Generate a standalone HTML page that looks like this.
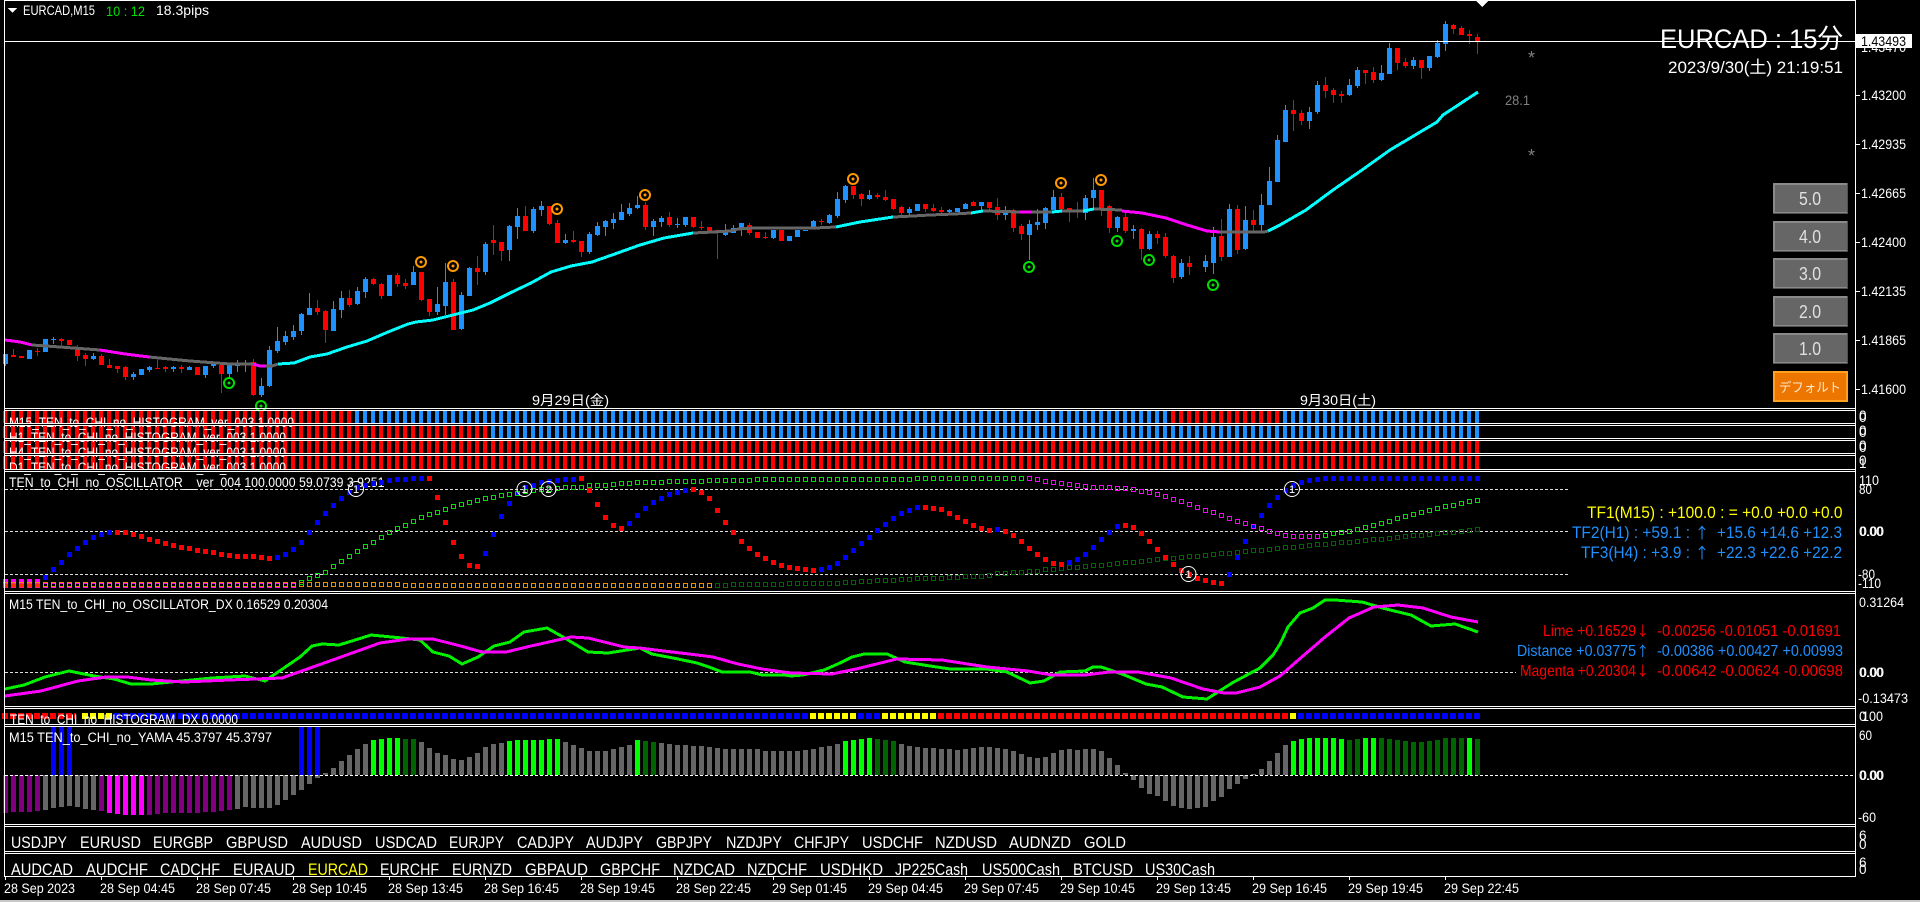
<!DOCTYPE html>
<html lang="ja"><head><meta charset="utf-8"><title>EURCAD,M15</title>
<style>
html,body{margin:0;padding:0;background:#000;width:1920px;height:902px;overflow:hidden}
svg{display:block;font-family:"Liberation Sans","Noto Sans CJK JP",sans-serif;font-size:13.5px}
text{fill:#fff}
.n{fill:none;stroke:none}
path,rect,polyline,circle{shape-rendering:crispEdges}
circle.r{shape-rendering:auto}
.w{fill:none;stroke-width:1}
.b{fill:none;stroke-width:5}
.a{font-family:"Noto Sans CJK JP",sans-serif}
.mB{marker:url(#mB)}.mR{marker:url(#mR)}.mG{marker:url(#mG)}.mM{marker:url(#mM)}.mD{marker:url(#mD)}
</style></head><body>
<svg width="1920" height="902" viewBox="0 0 1920 902" xmlns="http://www.w3.org/2000/svg">
<defs>
<marker id="mB" markerUnits="userSpaceOnUse" markerWidth="5" markerHeight="5" refX="2" refY="2" overflow="visible"><rect width="5" height="5" fill="#0000ff"/></marker>
<marker id="mR" markerUnits="userSpaceOnUse" markerWidth="5" markerHeight="5" refX="2" refY="2" overflow="visible"><rect width="5" height="5" fill="#ff0000"/></marker>
<marker id="mG" markerUnits="userSpaceOnUse" markerWidth="6" markerHeight="6" refX="2" refY="2" overflow="visible"><rect x=".5" y=".5" width="4" height="4" fill="none" stroke="#00e000"/></marker>
<marker id="mM" markerUnits="userSpaceOnUse" markerWidth="6" markerHeight="6" refX="2" refY="2" overflow="visible"><rect x=".5" y=".5" width="4" height="4" fill="none" stroke="#ff00ff"/></marker>
<marker id="mD" markerUnits="userSpaceOnUse" markerWidth="6" markerHeight="6" refX="2" refY="2" overflow="visible"><rect x=".5" y=".5" width="4" height="4" fill="none" stroke="#006400"/></marker>
<pattern id="po1" patternUnits="userSpaceOnUse" x="3" y="582" width="8" height="5"><rect x=".5" y=".5" width="4" height="4" fill="none" stroke="#f08c00"/></pattern>
<pattern id="po2" patternUnits="userSpaceOnUse" x="3" y="583" width="8" height="5"><rect x=".5" y=".5" width="4" height="4" fill="none" stroke="#f08c00"/></pattern>
<pattern id="pm" patternUnits="userSpaceOnUse" x="3" y="583" width="8" height="5"><rect x=".5" y=".5" width="4" height="4" fill="none" stroke="#ff00ff"/></pattern>
</defs>
<rect width="1920" height="902" fill="#000"/>

<!-- candles -->
<path class="w" stroke="#1e90ff" d="M5.5 354V366M45.5 339V352M53.5 337V344M93.5 353V360M133.5 372V380M149.5 366V372M173.5 366V372M189.5 366V370M205.5 366V378M213.5 363V368M229.5 364V378M237.5 360V372M245.5 360V372M261.5 378V397M269.5 346V387M277.5 327V353M285.5 331V345M293.5 325V340M301.5 313V335M309.5 293V315M333.5 301V331M341.5 291V318M357.5 287V305M365.5 277V298M413.5 266V285M437.5 287V315M445.5 263V315M461.5 292V330M469.5 267V296M485.5 242V275M509.5 225V261M517.5 208V239M533.5 207V233M541.5 201V216M565.5 234V244M589.5 232V254M597.5 222V236M605.5 220V236M613.5 213V229M621.5 204V220M629.5 203V216M637.5 196V209M653.5 219V236M661.5 216V227M677.5 218V228M685.5 217V227M725.5 224V236M733.5 225V233M741.5 223V236M773.5 230V239M813.5 220V228M829.5 214V224M837.5 192V218M845.5 185V203M869.5 190V200M909.5 207V216M949.5 209V213M965.5 203V209M981.5 202V212M1005.5 206V220M1029.5 220V260M1037.5 209V230M1045.5 207V229M1053.5 190V210M1085.5 195V220M1093.5 178V209M1117.5 216V232M1133.5 225V239M1149.5 231V250M1181.5 259V279M1205.5 255V272M1213.5 227V274M1229.5 204V257M1245.5 206V250M1261.5 194V232M1269.5 167V205M1277.5 135V182M1285.5 105V142M1309.5 107V129M1317.5 81V114M1349.5 79V96M1357.5 67V88M1381.5 65V81M1389.5 43V74M1413.5 57V69M1429.5 56V71M1437.5 40V58M1445.5 21V51"/>
<path class="w" stroke="#f00" d="M13.5 349V357M37.5 348V356M61.5 338V345M77.5 345V361M85.5 353V366M101.5 354V365M109.5 359V368M117.5 366V373M125.5 366V380M157.5 360V369M165.5 366V372M181.5 365V373M221.5 363V393M253.5 359V396M317.5 300V315M325.5 310V343M349.5 290V307M373.5 278V285M381.5 283V299M397.5 273V287M405.5 279V289M421.5 272V301M429.5 299V316M453.5 279V330M477.5 256V285M493.5 225V255M501.5 242V261M525.5 206V231M549.5 206V225M557.5 220V243M573.5 231V243M581.5 241V257M645.5 202V230M669.5 212V227M693.5 217V228M701.5 221V230M717.5 230V259M749.5 223V235M765.5 232V239M821.5 219V225M853.5 186V199M861.5 193V206M877.5 193V199M885.5 190V201M893.5 199V210M901.5 206V215M925.5 204V212M933.5 204V212M941.5 207V213M973.5 201V206M989.5 202V210M997.5 198V220M1013.5 209V232M1021.5 224V240M1061.5 193V213M1069.5 208V222M1077.5 202V218M1101.5 190V216M1109.5 205V233M1125.5 210V233M1141.5 228V260M1157.5 231V244M1165.5 233V258M1173.5 255V283M1189.5 256V275M1221.5 219V261M1237.5 205V254M1253.5 210V232M1293.5 100V131M1301.5 110V125M1325.5 77V98M1333.5 88V103M1341.5 91V103M1365.5 70V84M1373.5 67V83M1397.5 48V70M1405.5 58V68M1421.5 60V79M1453.5 24V34M1461.5 26V35M1469.5 30V44M1477.5 34V54"/>
<path class="b" stroke="#1e90ff" d="M5.5 354V364M29.5 350V359M45.5 339V352M53.5 339V340M93.5 356V359M133.5 374V377M141.5 369V375M149.5 367V370M173.5 367V369M189.5 367V370M205.5 366V375M213.5 364V366M229.5 364V374M237.5 363V366M245.5 363V364M261.5 386V395M269.5 350V386M277.5 341V351M285.5 336V342M293.5 331V337M301.5 314V331M309.5 308V315M333.5 309V331M341.5 298V310M357.5 291V304M365.5 279V292M389.5 275V296M413.5 272V285M437.5 304V312M445.5 282V306M461.5 295V329M469.5 268V296M485.5 244V272M509.5 226V250M517.5 216V227M533.5 209V231M541.5 206V210M565.5 240V243M589.5 234V252M597.5 226V235M605.5 221V227M613.5 219V223M621.5 212V220M629.5 208V214M637.5 205V208M653.5 221V227M661.5 218V222M677.5 224V225M685.5 217V225M725.5 232V235M733.5 228V233M741.5 223V230M773.5 230V238M789.5 236V241M797.5 230V237M805.5 230V231M813.5 221V228M829.5 215V223M837.5 199V216M845.5 186V200M869.5 195V199M909.5 209V213M917.5 204V211M949.5 210V212M957.5 208V212M965.5 204V209M981.5 202V206M1005.5 210V215M1029.5 224V235M1037.5 222V225M1045.5 208V223M1053.5 197V210M1085.5 198V213M1093.5 190V198M1117.5 217V228M1133.5 229V231M1149.5 234V249M1181.5 263V277M1205.5 261V267M1213.5 237V263M1229.5 209V257M1245.5 220V249M1261.5 205V225M1269.5 181V205M1277.5 140V182M1285.5 110V142M1309.5 112V121M1317.5 85V112M1349.5 85V95M1357.5 70V86M1381.5 73V80M1389.5 48V74M1413.5 60V66M1429.5 56V68M1437.5 43V57M1445.5 24V44"/>
<path class="b" stroke="#f00" d="M13.5 355V357M21.5 356V358M37.5 351V352M61.5 339V341M69.5 340V345M77.5 348V356M85.5 355V359M101.5 356V365M109.5 365V368M117.5 366V369M125.5 367V377M157.5 368V369M165.5 367V369M181.5 367V369M197.5 367V375M221.5 365V374M253.5 362V395M317.5 308V312M325.5 311V330M349.5 298V305M373.5 279V284M381.5 284V296M397.5 275V284M405.5 283V286M421.5 272V300M429.5 299V312M453.5 282V330M477.5 268V272M493.5 240V243M501.5 242V251M525.5 216V231M549.5 206V224M557.5 223V243M573.5 240V242M581.5 241V252M645.5 205V227M669.5 217V225M693.5 217V227M701.5 227V228M709.5 227V231M717.5 230V233M749.5 225V233M757.5 232V238M765.5 237V238M781.5 230V241M821.5 221V222M853.5 186V195M861.5 194V199M877.5 195V197M885.5 197V200M893.5 199V209M901.5 207V213M925.5 204V209M933.5 208V211M941.5 210V212M973.5 202V206M989.5 202V208M997.5 207V215M1013.5 210V228M1021.5 226V234M1061.5 197V209M1069.5 208V212M1077.5 210V211M1101.5 190V208M1109.5 206V228M1125.5 217V231M1141.5 229V249M1157.5 234V238M1165.5 237V256M1173.5 256V278M1189.5 263V267M1221.5 236V257M1237.5 209V250M1253.5 220V225M1293.5 110V114M1301.5 113V121M1325.5 85V91M1333.5 90V95M1341.5 94V96M1365.5 70V73M1373.5 72V80M1397.5 48V63M1405.5 62V66M1421.5 60V68M1453.5 25V29M1461.5 28V35M1469.5 34V36M1477.5 37V41"/>

<!-- moving average -->
<g fill="none" stroke-width="3" stroke-linejoin="round">
<polyline stroke="#ff00ff" points="5,340 20,342 32,345"/>
<polyline stroke="#666" points="32,345 60,347 100,350"/>
<polyline stroke="#ff00ff" points="100,350 125,354 149,357"/>
<polyline stroke="#666" points="149,357 190,361 230,364 253,364"/>
<polyline stroke="#ff00ff" points="253,364 260,366 265,366"/>
<polyline stroke="#666" points="265,366 272,366 278,364"/>
<polyline stroke="#00ffff" points="278,364 294,363 310,357 327,354 347,347 367,341 388,332 408,324 416,322 433,320 449,316 473,310 490,303 510,293 531,283 551,272 571,266 592,262 612,255 640,245 664,238 693,233"/>
<polyline stroke="#666" points="693,233 713,232 730,231 738,229 754,228 815,228 836,227"/>
<polyline stroke="#00ffff" points="836,227 860,222 893,217"/>
<polyline stroke="#666" points="893,217 913,216 930,215 954,214 971,213"/>
<polyline stroke="#00ffff" points="971,213 983,211"/>
<polyline stroke="#666" points="983,211 1020,212"/>
<polyline stroke="#ff00ff" points="1020,212 1032,212"/>
<polyline stroke="#666" points="1032,212 1052,212"/>
<polyline stroke="#00ffff" points="1052,212 1062,211"/>
<polyline stroke="#666" points="1062,211 1083,211"/>
<polyline stroke="#00ffff" points="1083,211 1094,209"/>
<polyline stroke="#666" points="1094,209 1122,210"/>
<polyline stroke="#ff00ff" points="1122,211 1142,213 1166,218 1187,225 1207,231 1220,232"/>
<polyline stroke="#666" points="1220,232 1264,232 1268,231"/>
<polyline stroke="#00ffff" points="1268,231 1280,225 1306,210 1333,190 1362,170 1390,150 1437,122 1443,115 1478,92"/>
</g>

<!-- arrow markers -->
<g fill="none" stroke-width="2" stroke="#ff9a00">
<circle class="r" cx="421" cy="262" r="5"/><circle class="r" cx="453" cy="266" r="5"/><circle class="r" cx="557" cy="209" r="5"/><circle class="r" cx="645" cy="195" r="5"/><circle class="r" cx="853" cy="179" r="5"/><circle class="r" cx="1061" cy="183" r="5"/><circle class="r" cx="1101" cy="180" r="5"/>
</g>
<g fill="#ff9a00">
<circle class="r" cx="421" cy="262" r="1.5"/><circle class="r" cx="453" cy="266" r="1.5"/><circle class="r" cx="557" cy="209" r="1.5"/><circle class="r" cx="645" cy="195" r="1.5"/><circle class="r" cx="853" cy="179" r="1.5"/><circle class="r" cx="1061" cy="183" r="1.5"/><circle class="r" cx="1101" cy="180" r="1.5"/>
</g>
<g fill="none" stroke-width="2" stroke="#00e000">
<circle class="r" cx="229" cy="383" r="5"/><circle class="r" cx="261" cy="406" r="5"/><circle class="r" cx="1029" cy="267" r="5"/><circle class="r" cx="1117" cy="241" r="5"/><circle class="r" cx="1149" cy="260" r="5"/><circle class="r" cx="1213" cy="285" r="5"/>
</g>
<g fill="#00e000">
<circle class="r" cx="229" cy="383" r="1.5"/><circle class="r" cx="261" cy="406" r="1.5"/><circle class="r" cx="1029" cy="267" r="1.5"/><circle class="r" cx="1117" cy="241" r="1.5"/><circle class="r" cx="1149" cy="260" r="1.5"/><circle class="r" cx="1213" cy="285" r="1.5"/>
</g>

<!-- main chart labels -->
<path d="M8 8H17L12.5 13Z" fill="#fff"/>
<text x="23" y="15" textLength="72" lengthAdjust="spacingAndGlyphs">EURCAD,M15</text>
<text x="106" y="16" textLength="39" lengthAdjust="spacingAndGlyphs" style="fill:#00e000;font-size:14px">10 : 12</text>
<text x="156" y="15" textLength="53" lengthAdjust="spacingAndGlyphs">18.3pips</text>
<path d="M1476 1H1488L1482 7Z" fill="#fff"/>
<text x="532" y="405" textLength="77" lengthAdjust="spacingAndGlyphs">9月29日(金)</text>
<text x="1300" y="405" textLength="76" lengthAdjust="spacingAndGlyphs">9月30日(土)</text>
<text x="1505" y="105" textLength="25" lengthAdjust="spacingAndGlyphs" style="fill:#808080">28.1</text>
<text x="1528" y="64" style="fill:#808080;font-size:18px">*</text>
<text x="1528" y="162" style="fill:#808080;font-size:18px">*</text>

<!-- current price line -->
<path d="M5 41.5H1856" stroke="#fff" fill="none"/>
<text x="1660" y="48" textLength="183" lengthAdjust="spacingAndGlyphs" style="font-size:27px">EURCAD : 15分</text>
<text x="1668" y="73" textLength="175" lengthAdjust="spacingAndGlyphs" style="font-size:17px">2023/9/30(土) 21:19:51</text>

<!-- buttons -->
<g>
<rect x="1773" y="183" width="75" height="31" fill="#505050"/><rect x="1773" y="183" width="74" height="30" fill="#8a8a8a"/><rect x="1775" y="185" width="72" height="27" fill="#666"/>
<rect x="1773" y="221" width="75" height="31" fill="#505050"/><rect x="1773" y="221" width="74" height="30" fill="#8a8a8a"/><rect x="1775" y="223" width="72" height="27" fill="#666"/>
<rect x="1773" y="258" width="75" height="31" fill="#505050"/><rect x="1773" y="258" width="74" height="30" fill="#8a8a8a"/><rect x="1775" y="260" width="72" height="27" fill="#666"/>
<rect x="1773" y="296" width="75" height="31" fill="#505050"/><rect x="1773" y="296" width="74" height="30" fill="#8a8a8a"/><rect x="1775" y="298" width="72" height="27" fill="#666"/>
<rect x="1773" y="333" width="75" height="31" fill="#505050"/><rect x="1773" y="333" width="74" height="30" fill="#8a8a8a"/><rect x="1775" y="335" width="72" height="27" fill="#666"/>
<rect x="1773" y="371" width="75" height="31" fill="#ffa020"/><rect x="1775" y="373" width="71" height="27" fill="#ec7600"/>
</g>
<g style="font-size:18px">
<text x="1799" y="205" textLength="22" lengthAdjust="spacingAndGlyphs" style="fill:#e0e0e0">5.0</text>
<text x="1799" y="243" textLength="22" lengthAdjust="spacingAndGlyphs" style="fill:#e0e0e0">4.0</text>
<text x="1799" y="280" textLength="22" lengthAdjust="spacingAndGlyphs" style="fill:#e0e0e0">3.0</text>
<text x="1799" y="318" textLength="22" lengthAdjust="spacingAndGlyphs" style="fill:#e0e0e0">2.0</text>
<text x="1799" y="355" textLength="22" lengthAdjust="spacingAndGlyphs" style="fill:#e0e0e0">1.0</text>
</g>
<text x="1779" y="392" textLength="62" lengthAdjust="spacingAndGlyphs" style="font-size:13px;fill:#ffe8cc">デフォルト</text>

<!-- thin histograms -->
<g fill="none" stroke-width="12" stroke-dasharray="4 4">
<path stroke="#f00" d="M3 417H351"/><path stroke="#1e90ff" d="M355 417H1167"/><path stroke="#f00" d="M1171 417H1279"/><path stroke="#1e90ff" d="M1283 417H1479"/>
<path stroke="#f00" d="M3 432H487"/><path stroke="#1e90ff" d="M491 432H1479"/>
<path stroke="#f00" d="M3 447H1479"/>
<path stroke="#f00" stroke-width="13" d="M3 462.5H1479"/>
</g>
<text x="9" y="427" textLength="285" lengthAdjust="spacingAndGlyphs">M15_TEN_to_CHI_no_HISTOGRAM_ver_003 1.0000</text>
<text x="9" y="442" textLength="277" lengthAdjust="spacingAndGlyphs">H1_TEN_to_CHI_no_HISTOGRAM_ver_003 1.0000</text>
<text x="9" y="457" textLength="277" lengthAdjust="spacingAndGlyphs">H4_TEN_to_CHI_no_HISTOGRAM_ver_003 1.0000</text>
<text x="9" y="472" textLength="277" lengthAdjust="spacingAndGlyphs">D1_TEN_to_CHI_no_HISTOGRAM_ver_003 1.0000</text>
<rect x="5" y="423" width="320" height="3" fill="#000"/><rect x="5" y="438" width="320" height="3" fill="#000"/><rect x="5" y="453" width="320" height="3" fill="#000"/><rect x="5" y="469" width="320" height="5" fill="#000"/>

<!-- oscillator -->
<g fill="none" stroke="#ddd" stroke-dasharray="3 2">
<path d="M5 489.5H1569M5 531.5H1569M5 574.5H1569"/>
<path d="M5 672.5H1516"/>
</g>
<text x="9" y="487" textLength="375.5" lengthAdjust="spacingAndGlyphs">TEN_to_CHI_no_OSCILLATOR__ver_004 100.0000 59.0739 3.9251</text>
<rect x="3" y="583" width="296" height="5" fill="url(#pm)"/>
<rect x="3" y="582" width="400" height="5" fill="url(#po1)"/>
<rect x="403" y="583" width="309" height="5" fill="url(#po2)"/>
<path d="M3 585.5H43" stroke="#ff3000" stroke-width="4" stroke-dasharray="5 3" fill="none"/>
<path d="M3 580.5H43" stroke="#ff00ff" stroke-width="3" stroke-dasharray="5 3" fill="none"/>
<polyline class="n mD" points="717,585 725,585 733,584 741,584 749,584 757,584 765,584 773,584 781,584 789,583 797,583 805,583 813,583 821,583 829,583 837,583 845,582 853,582 861,581 869,581 877,580 885,580 893,580 901,579 909,579 917,578 925,578 933,578 941,578 949,577 957,577 965,576 973,576 981,576 989,575 997,573 1005,573 1013,572 1021,572 1029,571 1037,571 1045,569 1053,569 1061,568 1069,567 1077,567 1085,566 1093,565 1101,565 1109,564 1117,563 1125,562 1133,562 1141,561 1149,560 1157,559 1165,558 1173,558 1181,557 1189,556 1197,556 1205,555 1213,554 1221,553 1229,553 1237,552 1245,551 1253,550 1261,550 1269,549 1277,548 1285,547 1293,547 1301,546 1309,545 1317,544 1325,544 1333,543 1341,542 1349,542 1357,541 1365,540 1373,539 1381,539 1389,538 1397,537 1405,536 1413,535 1421,535 1429,534 1437,533 1445,532 1453,532 1461,531 1469,530 1477,529"/>
<polyline class="n mB" points="45,577 53,569 61,562 69,554 77,548 85,542 93,537 101,534 109,532"/>
<polyline class="n mR" points="117,532 125,532 133,534 141,536 149,539 157,541 165,543 173,545 181,547 189,548 197,550 205,551 213,552 221,554 229,555 237,556 245,556 253,556 261,557 269,558"/>
<polyline class="n mB" points="277,557 285,554 293,549 301,542 309,532 317,522 325,513 333,505 341,498 349,492 357,487 365,485 373,483 381,482 389,480 397,479 405,479 413,478 421,478"/>
<polyline class="n mR" points="429,478 437,497 445,522 453,542 461,556 469,565 477,566"/>
<polyline class="n mB" points="485,553 493,534 501,516 509,503 517,493 525,487 533,485 541,482 549,481 557,480 565,479 573,479"/>
<polyline class="n mR" points="581,478 589,490 597,504 605,517 613,525 621,528"/>
<polyline class="n mB" points="629,523 637,515 645,508 653,502 661,498 669,494 677,492 685,490"/>
<polyline class="n mR" points="693,489 701,492 709,498 717,510 725,522 733,532 741,541 749,548 757,554 765,558 773,562 781,565 789,567 797,568 805,569 813,570"/>
<polyline class="n mB" points="821,569 829,567 837,563 845,557 853,550 861,543 869,537 877,530 885,524 893,518 901,513 909,510 917,507"/>
<polyline class="n mR" points="925,507 933,508 941,509 949,513 957,517 965,521 973,525 981,528 989,530"/>
<polyline class="n mB" points="997,529"/>
<polyline class="n mR" points="1005,531 1013,535 1021,541 1029,548 1037,554 1045,559 1053,563 1061,564"/>
<polyline class="n mB" points="1069,562 1077,559 1085,554 1093,547 1101,539 1109,532 1117,526"/>
<polyline class="n mR" points="1125,525 1133,527 1141,533 1149,541 1157,549 1165,557 1173,564 1181,570 1189,574 1197,578 1205,580 1213,582 1221,583"/>
<polyline class="n mB" points="1229,574 1237,557 1245,541 1253,526 1261,515 1269,505 1277,497 1285,490 1293,485 1301,482 1309,480 1317,479 1325,478 1333,478 1341,478 1349,478 1357,478 1365,478 1373,478 1381,478 1389,478 1397,478 1405,478 1413,478 1421,478 1429,478 1437,478 1445,478 1453,478 1461,478 1469,478 1477,478"/>
<polyline class="n mG" points="301,582 309,578 317,575 325,572 333,566 341,561 349,556 357,551 365,546 373,542 381,537 389,532 397,528 405,525 413,521 421,517 429,514 437,512 445,509 453,506 461,504 469,502 477,500 485,498 493,497 501,495 509,494 517,493 525,491 533,490 541,489 549,489 557,488 565,487 573,487 581,487 589,485 597,485 605,485 613,484 621,483 629,483 637,482 645,482 653,482 661,482 669,481 677,481 685,481 693,481 701,481 709,480 717,480 725,480 733,480 741,480 749,480 757,479 765,479 773,479 781,479 789,479 797,479 805,479 813,479 821,479 829,479 837,479 845,479 853,479 861,479 869,479 877,479 885,479 893,479 901,479 909,479 917,478 925,478 933,478 941,478 949,478 957,478 965,478 973,478 981,478 989,478 997,478 1005,478 1013,478 1021,478"/>
<polyline class="n mM" points="1029,478 1037,479 1045,481 1053,482 1061,483 1069,484 1077,485 1085,486 1093,487 1101,487 1109,487 1117,488 1125,488 1133,489 1141,491 1149,492 1157,494 1165,496 1173,499 1181,501 1189,504 1197,507 1205,510 1213,512 1221,515 1229,518 1237,521 1245,523 1253,526 1261,528 1269,531 1277,533 1285,535 1293,536 1301,536 1309,536 1317,536"/>
<polyline class="n mG" points="1325,535 1333,533 1341,532 1349,531 1357,529 1365,527 1373,525 1381,523 1389,521 1397,518 1405,516 1413,514 1421,512 1429,510 1437,508 1445,506 1453,505 1461,503 1469,501 1477,500"/>
<g fill="none" stroke="#fff"><circle class="r" cx="356" cy="489" r="7.5"/><circle class="r" cx="524.5" cy="489" r="7.5"/><circle class="r" cx="548.5" cy="489" r="7.5"/><circle class="r" cx="1188.5" cy="574" r="7.5"/><circle class="r" cx="1292" cy="489" r="7.5"/></g>
<g style="font-size:11px"><text x="353" y="493">1</text><text x="521.5" y="493">1</text><text x="545.5" y="493">2</text><text x="1185.5" y="578">1</text><text x="1289" y="493">1</text></g>
<g style="font-size:17px">
<text x="1587" y="518" textLength="255.5" lengthAdjust="spacingAndGlyphs" style="fill:#ffff00">TF1(M15) : +100.0 : = +0.0 +0.0 +0.0</text>
<text x="1572" y="538" textLength="118" lengthAdjust="spacingAndGlyphs" style="fill:#1e90ff">TF2(H1) : +59.1 :</text>
<text x="1694.5" y="538" class="a" style="fill:#1e90ff;font-size:15px">↑</text>
<text x="1717" y="538" textLength="125" lengthAdjust="spacingAndGlyphs" style="fill:#1e90ff">+15.6 +14.6 +12.3</text>
<text x="1581" y="558" textLength="109" lengthAdjust="spacingAndGlyphs" style="fill:#1e90ff">TF3(H4) : +3.9 :</text>
<text x="1694.5" y="558" class="a" style="fill:#1e90ff;font-size:15px">↑</text>
<text x="1717" y="558" textLength="125" lengthAdjust="spacingAndGlyphs" style="fill:#1e90ff">+22.3 +22.6 +22.2</text>
</g>

<!-- DX -->
<text x="9" y="609" textLength="319" lengthAdjust="spacingAndGlyphs">M15 TEN_to_CHI_no_OSCILLATOR_DX  0.16529 0.20304</text>
<g fill="none" stroke-width="3" stroke-linejoin="round">
<polyline stroke="#00f000" points="5,689 24,685 45,677 69,671 94,676 114,679 131,684 151,684 171,682 212,678 245,676 265,681 278,672 300,657 312,646 322,644 339,645 371,635 402,638 420,640 433,652 449,656 462,664 478,657 494,646 510,642 524,632 547,628 563,637 588,652 608,653 640,648 652,654 673,658 697,663 709,667 722,672 750,672 762,675 785,675 791,676 803,675 824,670 840,663 852,657 864,654 887,654 905,662 930,666 950,669 987,669 1007,672 1030,683 1044,681 1060,672 1085,671 1093,667 1101,667 1122,674 1146,684 1162,687 1183,697 1207,699 1232,683 1260,668 1273,655 1280,644 1288,627 1300,613 1313,608 1325,600 1335,600 1362,602 1386,609 1411,615 1431,626 1455,624 1478,632"/>
<polyline stroke="#ff00ff" points="5,696 41,691 78,681 106,677 127,677 151,680 184,682 229,680 282,678 327,662 380,643 408,639 433,639 457,645 482,652 506,652 531,646 571,637 588,638 624,647 640,648 664,651 689,654 713,657 738,664 762,669 791,673 832,674 856,669 897,659 942,660 987,667 1028,671 1052,675 1085,675 1109,672 1138,672 1171,678 1203,689 1224,693 1236,693 1260,687 1280,676 1296,662 1325,637 1349,618 1374,607 1398,605 1423,608 1451,617 1478,622"/>
</g>
<g style="font-size:16px">
<text x="1543" y="636" textLength="93" lengthAdjust="spacingAndGlyphs" style="fill:#f00">Lime +0.16529</text>
<text x="1636" y="636" class="a" style="fill:#f00;font-size:13.5px">↓</text>
<text x="1657" y="636" textLength="184" lengthAdjust="spacingAndGlyphs" style="fill:#f00">-0.00256 -0.01051 -0.01691</text>
<text x="1517" y="656" textLength="119" lengthAdjust="spacingAndGlyphs" style="fill:#1e90ff">Distance +0.03775</text>
<text x="1636" y="656" class="a" style="fill:#1e90ff;font-size:13.5px">↑</text>
<text x="1657" y="656" textLength="186" lengthAdjust="spacingAndGlyphs" style="fill:#1e90ff">-0.00386 +0.00427 +0.00993</text>
<text x="1520" y="676" textLength="116" lengthAdjust="spacingAndGlyphs" style="fill:#f00">Magenta +0.20304</text>
<text x="1636" y="676" class="a" style="fill:#f00;font-size:13.5px">↓</text>
<text x="1657" y="676" textLength="186" lengthAdjust="spacingAndGlyphs" style="fill:#f00">-0.00642 -0.00624 -0.00698</text>
</g>

<!-- DX histogram squares -->
<g fill="none" stroke-width="6" stroke-dasharray="6 2">
<path stroke="#f00" d="M2 716H76"/>
<path stroke="#ff0" d="M82 716H116"/>
<path stroke="#00f" d="M114 716H810"/>
<path stroke="#ff0" d="M810 716H858"/>
<path stroke="#00f" d="M858 716H882"/>
<path stroke="#ff0" d="M882 716H938"/>
<path stroke="#f00" d="M938 716H1290"/>
<path stroke="#ff0" d="M1290 716H1298"/>
<path stroke="#00f" d="M1298 716H1482"/>
</g>
<text x="10" y="724" textLength="228" lengthAdjust="spacingAndGlyphs">TEN_to_CHI_no_HISTOGRAM_DX 0.0000</text>

<!-- YAMA -->
<g fill="none" stroke-width="5">
<path stroke="#800080" d="M5.5 775V813M13.5 775V812M21.5 775V812M29.5 775V812M37.5 775V811M101.5 775V811M149.5 775V815M157.5 775V814M165.5 775V813M173.5 775V813M181.5 775V813M189.5 775V813M197.5 775V813M205.5 775V812M213.5 775V812M221.5 775V811M229.5 775V810"/>
<path stroke="#ff00ff" d="M109.5 775V813M117.5 775V814M125.5 775V815M133.5 775V815M141.5 775V815"/>
<path stroke="#666" d="M45.5 775V810M53.5 775V808M61.5 775V807M69.5 775V806M77.5 775V807M85.5 775V809M93.5 775V810M237.5 775V809M245.5 775V807M253.5 775V808M261.5 775V808M269.5 775V808M277.5 775V805M285.5 775V800M293.5 775V795M301.5 775V790M309.5 775V784M317.5 775V778M325.5 775V773M333.5 775V768M341.5 775V761M349.5 775V755M357.5 775V749M365.5 775V744M421.5 775V742M429.5 775V748M437.5 775V753M445.5 775V755M453.5 775V759M461.5 775V760M469.5 775V757M477.5 775V753M485.5 775V747M493.5 775V744M501.5 775V743M565.5 775V742M573.5 775V745M581.5 775V748M589.5 775V751M597.5 775V751M605.5 775V751M613.5 775V749M621.5 775V747M629.5 775V745M661.5 775V743M669.5 775V744M677.5 775V745M685.5 775V745M693.5 775V746M701.5 775V746M709.5 775V747M717.5 775V748M725.5 775V749M733.5 775V749M741.5 775V749M749.5 775V749M757.5 775V749M765.5 775V751M773.5 775V751M781.5 775V751M789.5 775V751M797.5 775V751M805.5 775V750M813.5 775V749M821.5 775V747M829.5 775V746M837.5 775V744M901.5 775V744M909.5 775V746M917.5 775V747M925.5 775V748M933.5 775V748M941.5 775V749M949.5 775V749M957.5 775V750M965.5 775V749M973.5 775V748M981.5 775V747M989.5 775V747M997.5 775V748M1005.5 775V749M1013.5 775V751M1021.5 775V754M1029.5 775V757M1037.5 775V758M1045.5 775V757M1053.5 775V753M1061.5 775V750M1069.5 775V749M1077.5 775V750M1085.5 775V749M1093.5 775V749M1101.5 775V751M1109.5 775V758M1117.5 775V765M1125.5 775V773M1133.5 775V780M1141.5 775V788M1149.5 775V794M1157.5 775V796M1165.5 775V801M1173.5 775V806M1181.5 775V808M1189.5 775V809M1197.5 775V808M1205.5 775V807M1213.5 775V801M1221.5 775V797M1229.5 775V789M1237.5 775V784M1245.5 775V779M1253.5 775V774M1261.5 775V769M1269.5 775V761M1277.5 775V753M1285.5 775V745"/>
<path stroke="#00ff00" d="M373.5 775V740M381.5 775V739M389.5 775V738M397.5 775V738M509.5 775V741M517.5 775V740M525.5 775V740M533.5 775V740M541.5 775V740M549.5 775V739M557.5 775V739M637.5 775V740M845.5 775V741M853.5 775V740M861.5 775V739M869.5 775V738M1293.5 775V741M1301.5 775V739M1309.5 775V738M1317.5 775V738M1325.5 775V738M1333.5 775V738M1341.5 775V739M1365.5 775V738M1373.5 775V738M1469.5 775V738"/>
<path stroke="#006400" d="M405.5 775V739M413.5 775V739M645.5 775V741M653.5 775V742M877.5 775V739M885.5 775V740M893.5 775V741M1349.5 775V740M1357.5 775V739M1381.5 775V738M1389.5 775V739M1397.5 775V740M1405.5 775V741M1413.5 775V742M1421.5 775V742M1429.5 775V741M1437.5 775V740M1445.5 775V738M1453.5 775V738M1461.5 775V738M1477.5 775V739"/>
<path stroke="#0000ff" d="M53.5 727V775M61.5 727V775M69.5 727V775M301.5 727V775M309.5 727V775M317.5 727V775"/>
</g>
<path d="M5 775.5H1855" fill="none" stroke="#fff" stroke-dasharray="3 2"/>
<text x="9" y="742" textLength="263" lengthAdjust="spacingAndGlyphs">M15  TEN_to_CHI_no_YAMA  45.3797 45.3797</text>

<!-- frame lines -->
<path fill="none" stroke="#fff" d="M4.5 0V876M1855.5 0V876M4 .5H1856M4 408.5H1856M4 410.5H1856M4 423.5H1856M4 425.5H1856M4 438.5H1856M4 440.5H1856M4 453.5H1856M4 455.5H1856M4 469.5H1856M4 471.5H1856M4 591.5H1856M4 593.5H1856M4 706.5H1856M4 708.5H1856M4 724.5H1856M4 726.5H1856M4 824.5H1856M4 826.5H1856M4 851.5H1856M4 853.5H1856M4 876.5H1856"/>
<path fill="none" stroke="#fff" d="M1855 95.5h5M1855 144.5h5M1855 193.5h5M1855 242.5h5M1855 291.5h5M1855 340.5h5M1855 389.5h5M5.5 876v4M101.5 876v4M197.5 876v4M293.5 876v4M389.5 876v4M485.5 876v4M581.5 876v4M677.5 876v4M773.5 876v4M869.5 876v4M965.5 876v4M1061.5 876v4M1157.5 876v4M1253.5 876v4M1349.5 876v4M1445.5 876v4"/>

<!-- price axis -->
<g>
<text x="1861" y="52" textLength="45" lengthAdjust="spacingAndGlyphs">1.43470</text>
<rect x="1856" y="34" width="56" height="14" fill="#fff"/>
<text x="1861" y="46" textLength="45" lengthAdjust="spacingAndGlyphs" style="fill:#000">1.43493</text>
<text x="1861" y="100" textLength="45" lengthAdjust="spacingAndGlyphs">1.43200</text>
<text x="1861" y="149" textLength="45" lengthAdjust="spacingAndGlyphs">1.42935</text>
<text x="1861" y="198" textLength="45" lengthAdjust="spacingAndGlyphs">1.42665</text>
<text x="1861" y="247" textLength="45" lengthAdjust="spacingAndGlyphs">1.42400</text>
<text x="1861" y="296" textLength="45" lengthAdjust="spacingAndGlyphs">1.42135</text>
<text x="1861" y="345" textLength="45" lengthAdjust="spacingAndGlyphs">1.41865</text>
<text x="1861" y="394" textLength="45" lengthAdjust="spacingAndGlyphs">1.41600</text>
<text x="1859" y="420">0</text><text x="1859" y="422">0</text>
<text x="1859" y="435">0</text><text x="1859" y="437">0</text>
<text x="1859" y="450">0</text><text x="1859" y="452">0</text>
<text x="1859" y="465">0</text><text x="1859" y="468">1</text>
<text x="1859" y="485" textLength="20" lengthAdjust="spacingAndGlyphs">110</text>
<text x="1859" y="494" textLength="13" lengthAdjust="spacingAndGlyphs">80</text>
<text x="1859" y="536" textLength="24" lengthAdjust="spacingAndGlyphs">0.00</text><text x="1860" y="536" textLength="24" lengthAdjust="spacingAndGlyphs">0.00</text>
<text x="1858" y="579" textLength="17" lengthAdjust="spacingAndGlyphs">-80</text>
<text x="1858" y="588" textLength="23" lengthAdjust="spacingAndGlyphs">-110</text>
<text x="1859" y="607" textLength="45" lengthAdjust="spacingAndGlyphs">0.31264</text>
<text x="1859" y="677" textLength="24" lengthAdjust="spacingAndGlyphs">0.00</text><text x="1860" y="677" textLength="24" lengthAdjust="spacingAndGlyphs">0.00</text>
<text x="1858" y="703" textLength="50" lengthAdjust="spacingAndGlyphs">-0.13473</text>
<text x="1859" y="721">0</text><text x="1862" y="721" textLength="21" lengthAdjust="spacingAndGlyphs">100</text>
<text x="1859" y="740" textLength="13" lengthAdjust="spacingAndGlyphs">60</text>
<text x="1859" y="780" textLength="24" lengthAdjust="spacingAndGlyphs">0.00</text><text x="1860" y="780" textLength="24" lengthAdjust="spacingAndGlyphs">0.00</text>
<text x="1858" y="822" textLength="18" lengthAdjust="spacingAndGlyphs">-60</text>
<text x="1859" y="840">6</text><text x="1859" y="849">0</text>
<text x="1859" y="867">6</text><text x="1859" y="874">0</text>
</g>

<!-- symbol rows -->
<g style="font-size:16.5px">
<text x="11" y="848" textLength="56" lengthAdjust="spacingAndGlyphs">USDJPY</text>
<text x="80" y="848" textLength="61" lengthAdjust="spacingAndGlyphs">EURUSD</text>
<text x="153" y="848" textLength="60" lengthAdjust="spacingAndGlyphs">EURGBP</text>
<text x="226" y="848" textLength="62" lengthAdjust="spacingAndGlyphs">GBPUSD</text>
<text x="301" y="848" textLength="61" lengthAdjust="spacingAndGlyphs">AUDUSD</text>
<text x="375" y="848" textLength="62" lengthAdjust="spacingAndGlyphs">USDCAD</text>
<text x="449" y="848" textLength="55" lengthAdjust="spacingAndGlyphs">EURJPY</text>
<text x="517" y="848" textLength="57" lengthAdjust="spacingAndGlyphs">CADJPY</text>
<text x="586" y="848" textLength="57" lengthAdjust="spacingAndGlyphs">AUDJPY</text>
<text x="656" y="848" textLength="56" lengthAdjust="spacingAndGlyphs">GBPJPY</text>
<text x="726" y="848" textLength="56" lengthAdjust="spacingAndGlyphs">NZDJPY</text>
<text x="794" y="848" textLength="55" lengthAdjust="spacingAndGlyphs">CHFJPY</text>
<text x="862" y="848" textLength="61" lengthAdjust="spacingAndGlyphs">USDCHF</text>
<text x="935" y="848" textLength="62" lengthAdjust="spacingAndGlyphs">NZDUSD</text>
<text x="1009" y="848" textLength="62" lengthAdjust="spacingAndGlyphs">AUDNZD</text>
<text x="1084" y="848" textLength="42" lengthAdjust="spacingAndGlyphs">GOLD</text>
<text x="11" y="875" textLength="62" lengthAdjust="spacingAndGlyphs">AUDCAD</text>
<text x="86" y="875" textLength="62" lengthAdjust="spacingAndGlyphs">AUDCHF</text>
<text x="160" y="875" textLength="60" lengthAdjust="spacingAndGlyphs">CADCHF</text>
<text x="233" y="875" textLength="62" lengthAdjust="spacingAndGlyphs">EURAUD</text>
<text x="308" y="875" textLength="60" lengthAdjust="spacingAndGlyphs" style="fill:#ffff00">EURCAD</text>
<text x="380" y="875" textLength="59" lengthAdjust="spacingAndGlyphs">EURCHF</text>
<text x="452" y="875" textLength="60" lengthAdjust="spacingAndGlyphs">EURNZD</text>
<text x="525" y="875" textLength="63" lengthAdjust="spacingAndGlyphs">GBPAUD</text>
<text x="600" y="875" textLength="60" lengthAdjust="spacingAndGlyphs">GBPCHF</text>
<text x="673" y="875" textLength="62" lengthAdjust="spacingAndGlyphs">NZDCAD</text>
<text x="747" y="875" textLength="60" lengthAdjust="spacingAndGlyphs">NZDCHF</text>
<text x="820" y="875" textLength="63" lengthAdjust="spacingAndGlyphs">USDHKD</text>
<text x="895" y="875" textLength="73" lengthAdjust="spacingAndGlyphs">JP225Cash</text>
<text x="982" y="875" textLength="78" lengthAdjust="spacingAndGlyphs">US500Cash</text>
<text x="1073" y="875" textLength="60" lengthAdjust="spacingAndGlyphs">BTCUSD</text>
<text x="1145" y="875" textLength="70" lengthAdjust="spacingAndGlyphs">US30Cash</text>
</g>

<!-- time axis -->
<g>
<text x="4" y="893" textLength="71" lengthAdjust="spacingAndGlyphs">28 Sep 2023</text>
<text x="100" y="893" textLength="75" lengthAdjust="spacingAndGlyphs">28 Sep 04:45</text>
<text x="196" y="893" textLength="75" lengthAdjust="spacingAndGlyphs">28 Sep 07:45</text>
<text x="292" y="893" textLength="75" lengthAdjust="spacingAndGlyphs">28 Sep 10:45</text>
<text x="388" y="893" textLength="75" lengthAdjust="spacingAndGlyphs">28 Sep 13:45</text>
<text x="484" y="893" textLength="75" lengthAdjust="spacingAndGlyphs">28 Sep 16:45</text>
<text x="580" y="893" textLength="75" lengthAdjust="spacingAndGlyphs">28 Sep 19:45</text>
<text x="676" y="893" textLength="75" lengthAdjust="spacingAndGlyphs">28 Sep 22:45</text>
<text x="772" y="893" textLength="75" lengthAdjust="spacingAndGlyphs">29 Sep 01:45</text>
<text x="868" y="893" textLength="75" lengthAdjust="spacingAndGlyphs">29 Sep 04:45</text>
<text x="964" y="893" textLength="75" lengthAdjust="spacingAndGlyphs">29 Sep 07:45</text>
<text x="1060" y="893" textLength="75" lengthAdjust="spacingAndGlyphs">29 Sep 10:45</text>
<text x="1156" y="893" textLength="75" lengthAdjust="spacingAndGlyphs">29 Sep 13:45</text>
<text x="1252" y="893" textLength="75" lengthAdjust="spacingAndGlyphs">29 Sep 16:45</text>
<text x="1348" y="893" textLength="75" lengthAdjust="spacingAndGlyphs">29 Sep 19:45</text>
<text x="1444" y="893" textLength="75" lengthAdjust="spacingAndGlyphs">29 Sep 22:45</text>
</g>
<rect x="0" y="900" width="1920" height="2" fill="#c8c8c8"/>
</svg>
</body></html>
